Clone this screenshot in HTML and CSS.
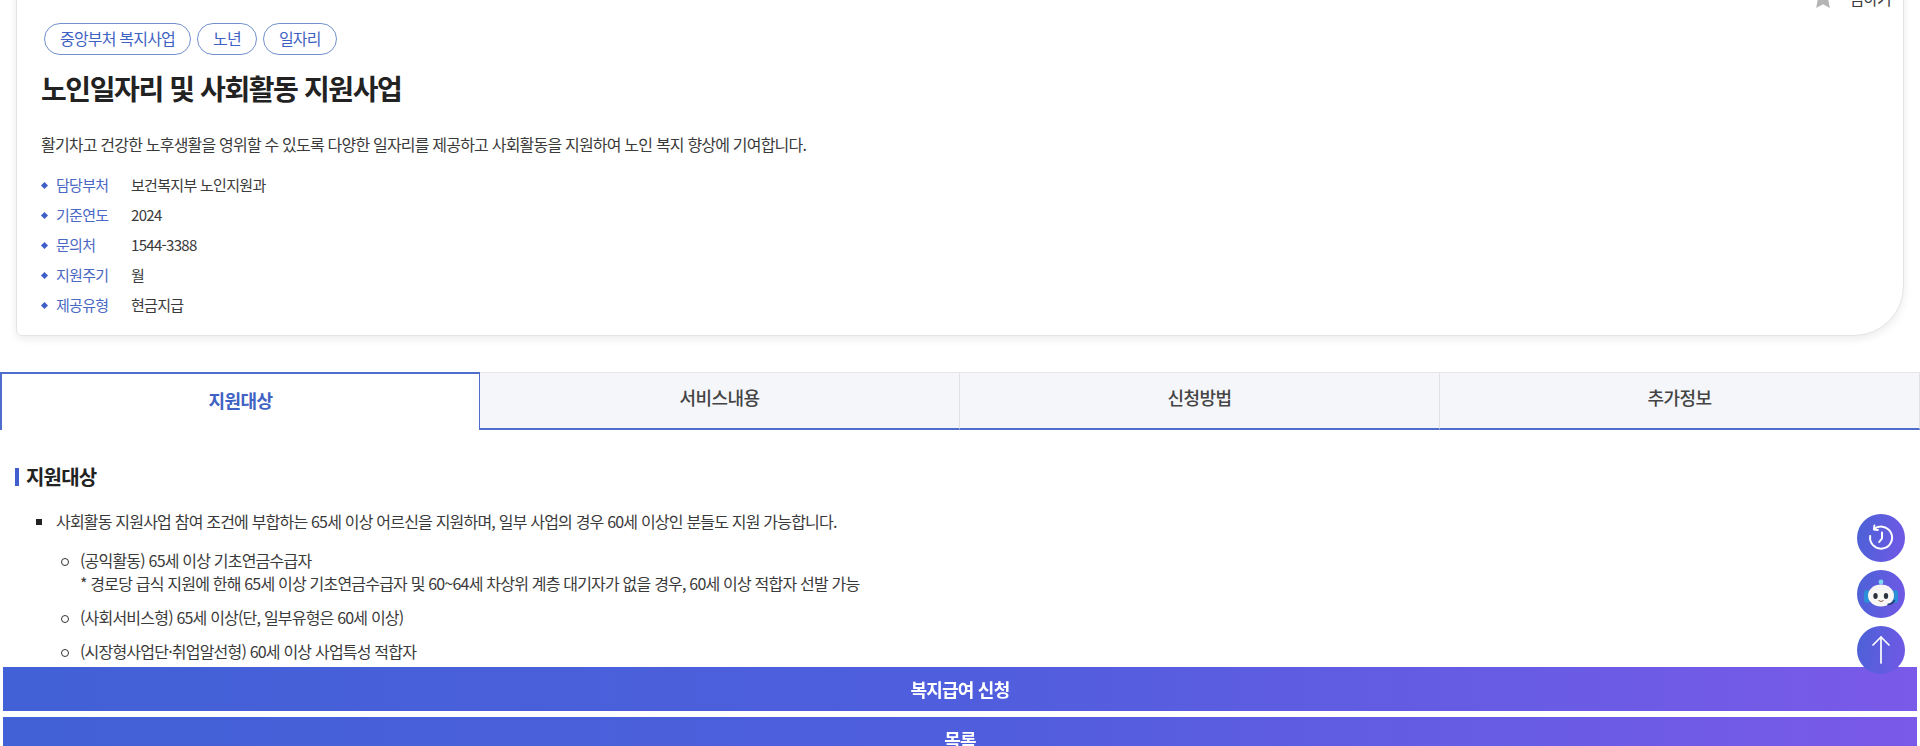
FILE: index.html
```html
<!DOCTYPE html>
<html lang="ko">
<head>
    <meta charset="UTF-8">
    <meta name="viewport" content="width=device-width, initial-scale=1.0">
    <title>노인일자리 및 사회활동 지원사업</title>
    <link rel="stylesheet" href="styles.css">
</head>
<body>
    <div class="page">
        <div class="card">
            <div class="save">
                <svg class="star" width="24" height="24" viewBox="0 0 24 24"><path d="M12 1l3.300 7 7.700 1-5.600 5.300 1.400 7.700-6.800-3.700L5.200 22l1.400-7.700L1 9l7.700-1z" fill="#b4b4b4"/></svg>
                <span>찜하기</span>
            </div>
            <div class="tags">
                <span class="tag">중앙부처 복지사업</span>
                <span class="tag">노년</span>
                <span class="tag">일자리</span>
            </div>
            <h1>노인일자리 및 사회활동 지원사업</h1>
            <p class="desc">활기차고 건강한 노후생활을 영위할 수 있도록 다양한 일자리를 제공하고 사회활동을 지원하여 노인 복지 향상에 기여합니다.</p>
            <ul class="info">
                <li><span class="info-label">담당부처</span><span>보건복지부 노인지원과</span></li>
                <li><span class="info-label">기준연도</span><span>2024</span></li>
                <li><span class="info-label">문의처</span><span>1544-3388</span></li>
                <li><span class="info-label">지원주기</span><span>월</span></li>
                <li><span class="info-label">제공유형</span><span>현금지급</span></li>
            </ul>
        </div>

        <div class="tabs">
            <div class="tab active">지원대상</div>
            <div class="tab">서비스내용</div>
            <div class="tab">신청방법</div>
            <div class="tab">추가정보</div>
        </div>

        <div class="content">
            <h2>지원대상</h2>
            <ul class="list">
                <li>사회활동 지원사업 참여 조건에 부합하는 65세 이상 어르신을 지원하며, 일부 사업의 경우 60세 이상인 분들도 지원 가능합니다.
                    <ul class="sublist">
                        <li>(공익활동) 65세 이상 기초연금수급자<br>* 경로당 급식 지원에 한해 65세 이상 기초연금수급자 및 60~64세 차상위 계층 대기자가 없을 경우, 60세 이상 적합자 선발 가능</li>
                        <li>(사회서비스형) 65세 이상(단, 일부유형은 60세 이상)</li>
                        <li>(시장형사업단·취업알선형) 60세 이상 사업특성 적합자</li>
                    </ul>
                </li>
            </ul>
        </div>
    </div>

    <div class="bottom-btns">
        <div class="bottom-btn">복지급여 신청</div>
        <div class="bottom-btn">목록</div>
    </div>

    <div class="floats">
        <div class="float-btn">
            <svg width="28" height="28" viewBox="0 0 28 28" fill="none" stroke="#fff" stroke-width="2" stroke-linecap="round" stroke-linejoin="round">
                <path d="M7 5.200A11 11 0 1 1 3.200 12"/>
                <path d="M7.400 1.600L7 5.400l3.800.5"/>
                <path d="M15 8.500v6l-2.800 3.500"/>
            </svg>
        </div>
        <div class="float-btn">
            <svg width="40" height="40" viewBox="0 0 40 40">
                <circle cx="20" cy="8" r="2.400" fill="#7fd6f4"/>
                <rect x="3" y="16" width="6" height="13" rx="3" fill="#2a8fd6"/>
                <rect x="31" y="16" width="6" height="13" rx="3" fill="#2a8fd6"/>
                <ellipse cx="20" cy="21.500" rx="13" ry="11" fill="#f7f6f4"/>
                <ellipse cx="14.500" cy="22" rx="2.200" ry="2.900" fill="#2c3140"/>
                <ellipse cx="25" cy="22" rx="2.200" ry="2.900" fill="#2c3140"/>
                <path d="M17.500 26.500q2.500 2 5 0" fill="none" stroke="#8a5a50" stroke-width="1"/>
                <path d="M33.500 26q-1 4-7 4.500" fill="none" stroke="#1f3a70" stroke-width="1.500"/>
            </svg>
        </div>
        <div class="float-btn">
            <svg width="26" height="30" viewBox="0 0 26 30" fill="none" stroke="#fff" stroke-width="1.700" stroke-linecap="round" stroke-linejoin="round">
                <path d="M13 28V2"/>
                <path d="M5 10l8-8 8 8"/>
            </svg>
        </div>
    </div>
</body>
</html>
```

FILE: styles.css
```css
* {
    margin: 0;
    padding: 0;
    box-sizing: border-box;
}

html, body {
    height: 100%;
    overflow: hidden;
}

body {
    font-family: "Noto Sans CJK KR", "Noto Sans", sans-serif;
    background-color: #fff;
    color: #3a3a3a;
    font-size: 16px;
    letter-spacing: -0.8px;
}

ul {
    list-style: none;
}

.page {
    margin-top: -40px;
}

/* 상단 카드 */
.card {
    position: relative;
    margin: 0 16px;
    height: 376px;
    padding: 62px 24px 0 24px;
    background-color: #fff;
    border: 1px solid #e4e4e4;
    border-radius: 0 0 50px 6px;
    box-shadow: 0 3px 8px rgba(0, 0, 0, 0.08);
}

.save {
    position: absolute;
    top: 25px;
    right: 12px;
    display: flex;
    align-items: center;
    gap: 14px;
    font-size: 16px;
}

.tags {
    display: flex;
    gap: 6px;
    margin-left: 3px;
}

.tag {
    height: 32px;
    padding: 0 15px;
    border: 1px solid #7390cf;
    border-radius: 16px;
    color: #3f62c4;
    font-size: 16px;
    line-height: 29px;
}

h1 {
    margin-top: 12px;
    font-size: 28px;
    line-height: 42px;
    font-weight: 700;
    color: #222;
    letter-spacing: -1.4px;
}

.desc {
    margin-top: 23px;
    font-size: 16px;
    line-height: 24px;
}

.info {
    margin-top: 13px;
}

.info li {
    display: flex;
    height: 30px;
    align-items: center;
    font-size: 15px;
    letter-spacing: -0.7px;
}

.info-label {
    position: relative;
    width: 90px;
    padding-left: 15px;
    color: #4a68c4;
}

.info-label::before {
    content: "";
    position: absolute;
    left: 1px;
    top: 9px;
    width: 5px;
    height: 5px;
    background-color: #3f5fc8;
    transform: rotate(45deg);
}

/* 탭 */
.tabs {
    display: grid;
    grid-template-columns: repeat(4, 1fr);
    margin-top: 36px;
    height: 58px;
}

.tab {
    display: flex;
    align-items: center;
    justify-content: center;
    padding-bottom: 7px;
    background-color: #f5f6fa;
    border-top: 1px solid #e6e6e6;
    border-right: 1px solid #e2e2e2;
    border-bottom: 2px solid #4f6dca;
    font-size: 18px;
    font-weight: 500;
    color: #444;
    letter-spacing: -0.6px;
}

.tab.active {
    padding-bottom: 4px;
    background-color: #fff;
    border: 2px solid #4f6dca;
    border-bottom: none;
    border-right-width: 1px;
    color: #3f62c4;
    font-weight: 700;
}

/* 본문 */
.content {
    padding: 34px 15px 0 15px;
}

h2 {
    height: 26px;
    padding-left: 11px;
    font-size: 20px;
    line-height: 26px;
    font-weight: 700;
    color: #222;
    position: relative;
}

h2::before {
    content: "";
    position: absolute;
    left: 0;
    top: 4px;
    width: 4px;
    height: 18px;
    background-color: #3f5fd0;
}

.list {
    margin-top: 19px;
    padding-left: 41px;
    line-height: 24px;
}

.list > li {
    position: relative;
}

.list > li::before {
    content: "";
    position: absolute;
    left: -20px;
    top: 10px;
    width: 6px;
    height: 6px;
    background-color: #222;
}

.sublist {
    margin-top: 16px;
    padding-left: 24px;
    line-height: 23px;
}

.sublist li {
    position: relative;
    margin-bottom: 11px;
}

.sublist li::before {
    content: "";
    position: absolute;
    left: -19px;
    top: 9px;
    width: 6px;
    height: 6px;
    border: 1.500px solid #333;
    border-radius: 50%;
}

/* 하단 버튼 */
.bottom-btns {
    position: fixed;
    left: 3px;
    right: 3px;
    top: 667px;
}

.bottom-btn {
    height: 44px;
    margin-bottom: 6px;
    background: linear-gradient(90deg, #4261d6, #4f5edd 50%, #7a5ae8);
    color: #fff;
    font-size: 18px;
    font-weight: 700;
    line-height: 44px;
    text-align: center;
}

/* 플로팅 버튼 */
.floats {
    position: fixed;
    right: 15px;
    top: 514px;
    display: flex;
    flex-direction: column;
    gap: 8px;
}

.float-btn {
    width: 48px;
    height: 48px;
    display: flex;
    align-items: center;
    justify-content: center;
    border-radius: 50%;
    background: linear-gradient(100deg, #4a62d6, #7258e6);
}
```
